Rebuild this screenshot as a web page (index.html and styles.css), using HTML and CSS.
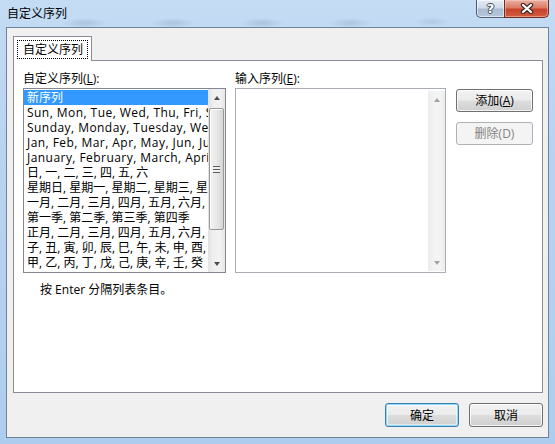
FILE: index.html
```html
<!DOCTYPE html>
<html lang="zh-CN">
<head>
  <meta charset="UTF-8">
  <title>自定义序列</title>
  <link rel="stylesheet" href="styles.css">
</head>
<body>
  <div class="window">
    <div class="titlebar">
      <span class="title">自定义序列</span>
      <div class="caption-btns">
        <span class="cap help">?</span>
        <span class="cap close">
          <svg width="14" height="11" viewBox="0 0 14 11">
            <path d="M3 2 L11 9 M11 2 L3 9" stroke="#3a2a28" stroke-width="4.4" stroke-linecap="round" fill="none"/>
            <path d="M3 2 L11 9 M11 2 L3 9" stroke="#fff" stroke-width="2.2" stroke-linecap="round" fill="none"/>
          </svg>
        </span>
      </div>
    </div>

    <div class="client">
      <div class="tabs">
        <div class="tab active"><span class="focus">自定义序列</span></div>
      </div>

      <div class="panel">
        <div class="cols">
          <div class="col col-list">
            <label class="field-label">自定义序列(<u>L</u>):</label>
            <div class="listbox">
              <ul class="items">
                <li class="selected">新序列</li>
                <li class="latin">Sun, Mon, Tue, Wed, Thu, Fri, Sat</li>
                <li class="latin">Sunday, Monday, Tuesday, Wednesday, Thursday, Friday, Saturday</li>
                <li class="latin">Jan, Feb, Mar, Apr, May, Jun, Jul, Aug, Sep, Oct, Nov, Dec</li>
                <li class="latin">January, February, March, April, May, June, July</li>
                <li>日, 一, 二, 三, 四, 五, 六</li>
                <li>星期日, 星期一, 星期二, 星期三, 星期四, 星期五, 星期六</li>
                <li>一月, 二月, 三月, 四月, 五月, 六月, 七月, 八月</li>
                <li>第一季, 第二季, 第三季, 第四季</li>
                <li>正月, 二月, 三月, 四月, 五月, 六月, 七月, 八月</li>
                <li>子, 丑, 寅, 卯, 辰, 巳, 午, 未, 申, 酉, 戌, 亥</li>
                <li>甲, 乙, 丙, 丁, 戊, 己, 庚, 辛, 壬, 癸</li>
              </ul>
              <div class="vscroll">
                <span class="arrow up"></span>
                <span class="thumb"><span class="grip"></span></span>
                <span class="track"></span>
                <span class="arrow down"></span>
              </div>
            </div>
          </div>

          <div class="col col-entry">
            <label class="field-label">输入序列(<u>E</u>):</label>
            <div class="textbox">
              <div class="area"></div>
              <div class="vscroll disabled">
                <span class="arrow up"></span>
                <span class="track"></span>
                <span class="arrow down"></span>
              </div>
            </div>
          </div>

          <div class="col col-btns">
            <button class="btn">添加(<u>A</u>)</button>
            <button class="btn" disabled>删除(D)</button>
          </div>
        </div>

        <p class="hint">按 Enter 分隔列表条目。</p>
      </div>

      <div class="footer">
        <button class="btn wide default">确定</button>
        <button class="btn wide">取消</button>
      </div>
    </div>
  </div>
</body>
</html>
```

FILE: styles.css
```css
* {
  margin: 0;
  padding: 0;
  box-sizing: border-box;
}

body {
  width: 555px;
  height: 444px;
  overflow: hidden;
  font-family: "Open Sans", "Noto Sans CJK SC", sans-serif;
  font-size: 12px;
  color: #000;
  background: linear-gradient(180deg, #c4dcf4 0%, #b9d4f0 30%, #aecdee 100%);
}

.window {
  display: flex;
  flex-direction: column;
  height: 444px;
}

/* title bar */
.titlebar {
  height: 27px;
  display: flex;
  justify-content: space-between;
  align-items: flex-start;
  background:
    radial-gradient(ellipse 22px 5px at 85px 23px, rgba(90, 110, 140, 0.22), transparent),
    radial-gradient(ellipse 22px 5px at 173px 23px, rgba(90, 110, 140, 0.22), transparent),
    radial-gradient(ellipse 22px 5px at 262px 23px, rgba(90, 110, 140, 0.22), transparent),
    radial-gradient(ellipse 22px 5px at 350px 23px, rgba(90, 110, 140, 0.2), transparent),
    radial-gradient(ellipse 18px 5px at 432px 22px, rgba(90, 110, 140, 0.15), transparent);
}

.title {
  padding: 6px 0 0 7px;
  line-height: 14px;
  font-family: "Noto Sans CJK SC", sans-serif;
}

.caption-btns {
  display: flex;
  margin-right: 6px;
}

.cap {
  height: 18px;
  display: flex;
  align-items: center;
  justify-content: center;
  border: 1px solid #4c5d73;
  border-top: none;
}

.help {
  width: 28px;
  border-right: none;
  border-bottom-left-radius: 5px;
  background: linear-gradient(180deg, #e4ecf5 0%, #cfdbe9 45%, #a9bbd1 55%, #b7c8dc 100%);
  box-shadow: inset 0 0 0 1px rgba(255, 255, 255, 0.55);
  color: #fff;
  font-family: "DejaVu Sans", sans-serif;
  font-weight: bold;
  font-size: 13px;
  text-shadow: 1px 0 #3d4b5c, -1px 0 #3d4b5c, 0 1px #3d4b5c, 0 -1px #3d4b5c;
}

.close {
  width: 45px;
  border-color: #6b2c22;
  border-bottom-right-radius: 5px;
  background: linear-gradient(180deg, #eab0a3 0%, #dc7a66 45%, #c7432d 55%, #d45c3f 100%);
  box-shadow: inset 0 0 0 1px rgba(255, 220, 210, 0.45);
}

/* client area */
.client {
  height: 411px;
  margin: 0 6px 6px;
  border: 1px solid #6f8298;
  background: #f0f0f0;
  padding: 8px 5px 10px 6px;
}

.tabs {
  height: 24px;
  display: flex;
}

.tab {
  position: relative;
  z-index: 1;
  width: 79px;
  height: 25px;
  border: 1px solid #898c95;
  border-bottom: none;
  background: #fff;
  padding: 3px 3px 0;
}

.focus {
  display: block;
  height: 19px;
  border: 1px dotted #000;
  line-height: 16px;
  padding-left: 5px;
  font-family: "Noto Sans CJK SC", sans-serif;
}

.panel {
  width: 530px;
  height: 333px;
  border: 1px solid #898c95;
  background: #fff;
  padding: 11px 0 0 9px;
}

.cols {
  display: flex;
}

.field-label {
  display: block;
  line-height: 14px;
  margin-bottom: 2px;
}

.col-list {
  width: 203px;
  margin-right: 9px;
}

.col-entry {
  width: 211px;
  margin-right: 10px;
}

.col-btns {
  display: flex;
  flex-direction: column;
  gap: 10px;
  padding-top: 17px;
}

.listbox {
  height: 185px;
  border: 1px solid #828790;
  display: flex;
}

.items {
  list-style: none;
  flex: 1;
  padding-top: 1px;
  overflow: hidden;
}

.items li {
  height: 15px;
  line-height: 15px;
  padding-left: 3px;
  white-space: nowrap;
  overflow: hidden;
}

.items li.latin {
  letter-spacing: 0.45px;
}

.items li.selected {
  background: #3399ff;
  color: #fff;
}

.textbox {
  height: 185px;
  border: 1px solid #a9adb4;
  display: flex;
  padding: 2px 0 1px;
}

.area {
  flex: 1;
}

/* scrollbars */
.vscroll {
  width: 17px;
  display: flex;
  flex-direction: column;
  background: linear-gradient(90deg, #e2e2e2, #efefef 30%, #f2f2f2 70%, #e6e6e6);
}

.vscroll.disabled {
  background: linear-gradient(90deg, #ececec, #f4f4f4 40%, #f4f4f4 70%, #ececec);
}

.arrow {
  height: 17px;
  display: flex;
  align-items: center;
  justify-content: center;
}

.arrow::before {
  content: "";
  border-left: 3.5px solid transparent;
  border-right: 3.5px solid transparent;
}

.arrow.up::before {
  border-bottom: 4px solid #4f4f4f;
}

.arrow.down::before {
  border-top: 4px solid #4f4f4f;
}

.disabled .arrow.up::before {
  border-bottom-color: #a3a3a3;
}

.disabled .arrow.down::before {
  border-top-color: #a3a3a3;
}

.thumb {
  height: 122px;
  margin: 2px 1px 0;
  border: 1px solid #989898;
  border-radius: 2px;
  background: linear-gradient(90deg, #f3f3f3, #e8e8e8 50%, #d6d6d6);
  box-shadow: inset 1px 1px 0 #fff;
  display: flex;
  align-items: center;
  justify-content: center;
}

.grip {
  width: 7px;
  height: 7px;
  background: repeating-linear-gradient(180deg, #5d5d5d 0, #5d5d5d 1px, #f0f0f0 1px, #f0f0f0 3px);
}

.track {
  flex: 1;
}

/* buttons */
.btn {
  font: inherit;
  width: 77px;
  height: 23px;
  border: 1px solid #707070;
  border-radius: 3px;
  background: linear-gradient(180deg, #f2f2f2 0%, #ebebeb 48%, #dddddd 52%, #cfcfcf 100%);
  box-shadow: inset 0 0 0 1px rgba(255, 255, 255, 0.75);
  color: #000;
  line-height: 19px;
}

.btn:disabled {
  border-color: #adb2b5;
  background: #f4f4f4;
  box-shadow: none;
  color: #838383;
}

.btn.wide {
  width: 74px;
  height: 24px;
}

.btn.default {
  border-color: #3c7fb1;
  box-shadow: inset 0 0 0 1px #8ed8f8, inset 0 0 0 2px rgba(255, 255, 255, 0.5);
}

.hint {
  margin: 10px 0 0 17px;
  line-height: 14px;
}

.footer {
  margin-top: 10px;
  display: flex;
  justify-content: flex-end;
  gap: 10px;
}
```
